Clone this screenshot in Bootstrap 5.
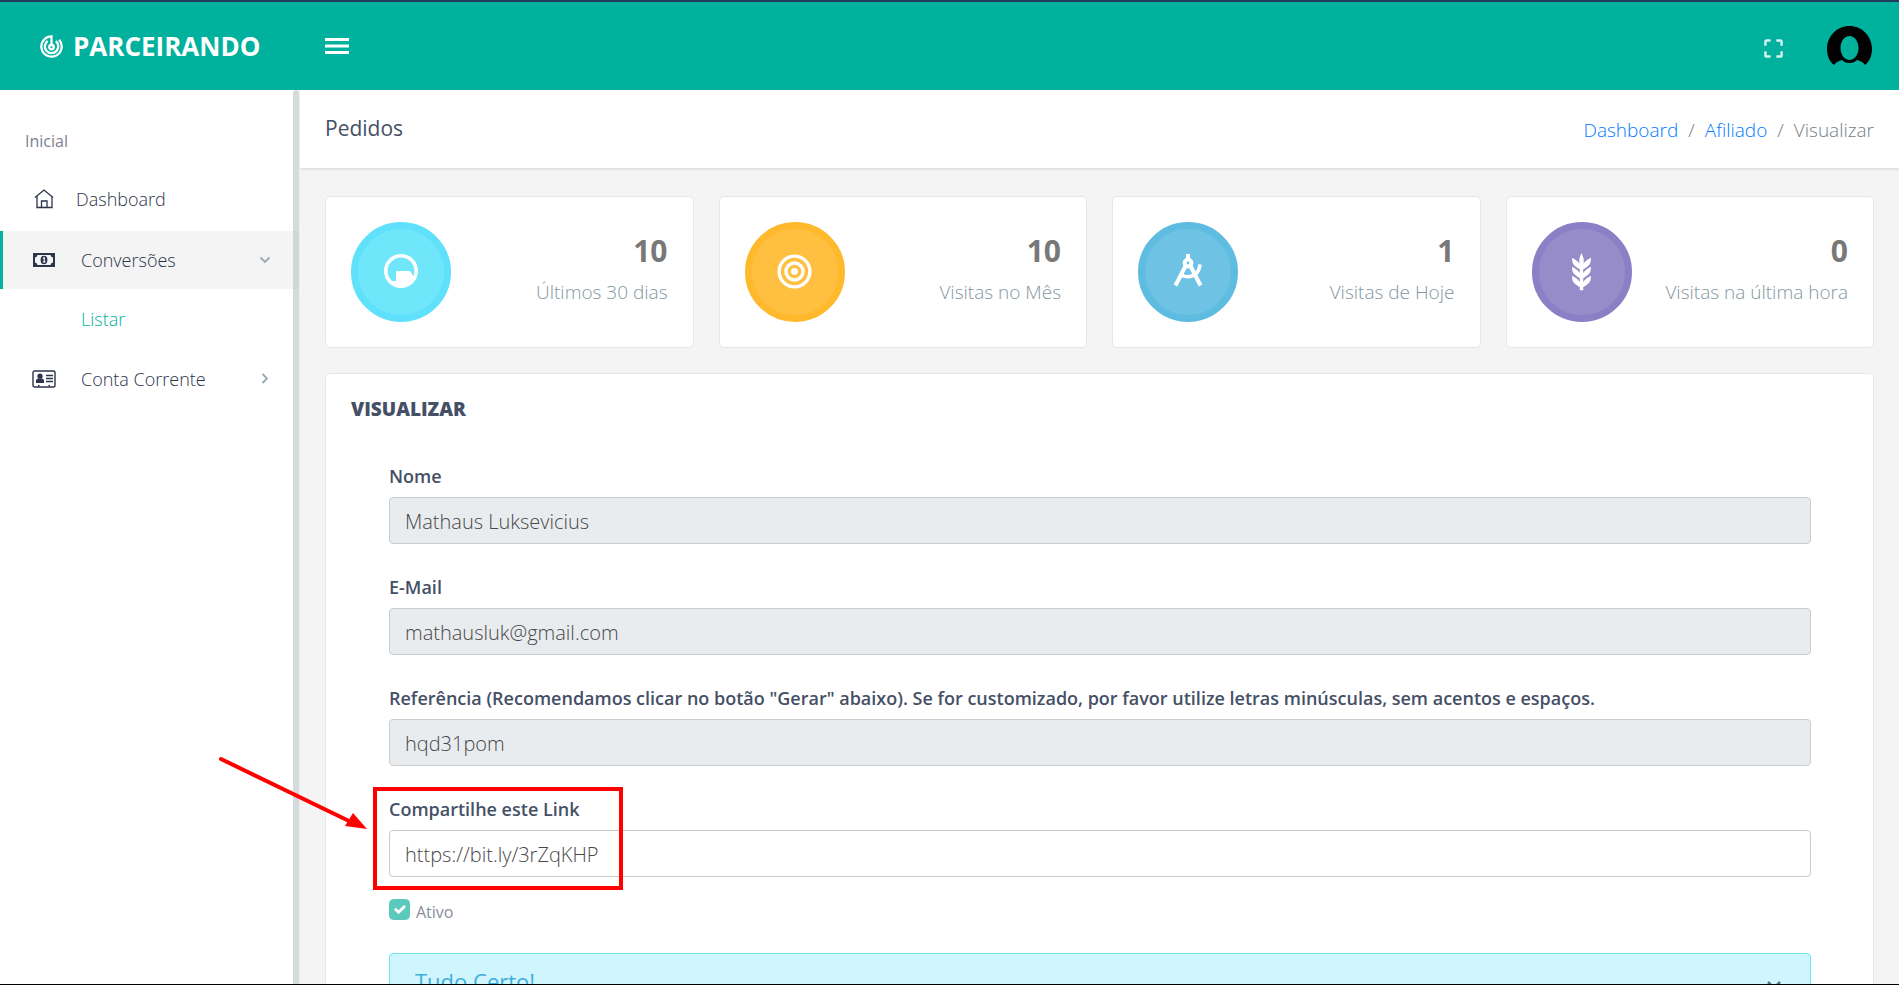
<!DOCTYPE html>
<html lang="pt-BR">
<head>
<meta charset="utf-8">
<meta name="viewport" content="width=device-width, initial-scale=1">
<title>Parceirando - Pedidos</title>
<link href="https://cdn.jsdelivr.net/npm/bootstrap@5.3.0/dist/css/bootstrap.min.css" rel="stylesheet">
<style>
  body { font-family: "Open Sans", "Noto Sans", sans-serif; font-weight: 300; font-size: 18px; line-height: 26px; color: #67757c; background: #f4f4f4; }
  .topbar { flex: none; height: 90px; background: #00b19d; border-top: 2px solid #1d3c5e; }
  .brand { width: 300px; padding-left: 40px; gap: 10px; font-size: 26px; font-weight: 700; color: #fff; text-decoration: none; }
  .avatar { margin: 0 26px 0 42px; }
  .side { flex: none; width: 300px; background: #fff; padding-top: 38px; border-right: 1px solid #eee; position: relative; }
  .side::after { content: ""; position: absolute; top: 0; bottom: 0; right: 0; width: 6px; border-radius: 3px 3px 0 0; background: rgba(190,198,202,.65); }
  .side-caption { padding-left: 25px; font-size: 16px; font-weight: 400; color: #7b8190; margin-bottom: 16px; }
  .side-link { display: flex; align-items: center; height: 58px; border-left: 3px solid transparent; padding: 0 28px 0 29px; color: #2b334b; text-decoration: none; }
  .side-link svg:first-child { flex: none; width: 24px; margin-right: 25px; }
  .side-link.home svg:first-child { margin-right: 20px; }
  .side-link.current { background: #f4f4f4; border-color: #00b19d; margin-top: 3px; }
  .side-sub { display: block; padding: 17px 0 18px 81px; color: #00b19d; text-decoration: none; }
  .pagehead { height: 78px; padding: 0 25px; background: #fff; box-shadow: 0 1px 3px rgba(0,0,0,.14); }
  .pagehead h1 { font-size: 21px; font-weight: 500; color: #455066; margin: 0; }
  .breadcrumb { --bs-breadcrumb-divider-color: #767e86; --bs-breadcrumb-item-active-color: #767e86; --bs-breadcrumb-item-padding-x: 10px; font-size: 19px; padding-top: 2px; }
  .breadcrumb a { color: #007bff; text-decoration: none; }
  .body-pad { padding: 28px 25px 0; }
  .tiles { --bs-gutter-x: 25px; }
  .card { border-color: #e6e6e6; border-radius: 5px; }
  .tile { height: 152px; padding: 25px; }
  .disc { flex: none; width: 100px; height: 100px; border: 7px solid; border-radius: 50%; display: flex; align-items: center; justify-content: center; }
  .disc svg { width: 36px; height: 36px; }
  .disc svg.wide { width: 41px; height: 41px; margin-bottom: 2px; }
  .figure-num { font-size: 30px; font-weight: 700; line-height: 38px; color: #787878; margin-bottom: 2px; }
  .figure-cap { font-size: 19px; color: #84979f; line-height: 40px; }
  .panel { margin-top: 25px; padding: 22px 25px; height: 700px; }
  .panel h2 { font-size: 19px; font-weight: 800; line-height: 26px; color: #455066; margin: 0 0 41px; }
  .fields { padding: 0 37px 0 38px; }
  .field { position: relative; margin-bottom: 30px; }
  .form-label { display: block; font-size: 18px; font-weight: 600; line-height: 26px; color: #455066; margin-bottom: 8px; }
  .form-control { height: 47px; padding: 9px 15px 7px; font-size: 20px; font-weight: 300; color: #484848; border: 1px solid #ccc; border-radius: 4px; }
  .form-control:disabled { background: #e9ecef; color: #484848; }
  .field-last { margin-bottom: 22px; }
  .frame { position: absolute; left: -16px; top: -9px; width: 250px; height: 103px; border: 4px solid #f00; }
  .arrow { position: absolute; left: -172px; top: -41px; }
  .check-row { gap: 6px; }
  .form-check-input { width: 21px; height: 21px; margin: 0; border-radius: 4px; }
  .form-check-input:checked { background-color: #5bcabc; border-color: #5bcabc; }
  .form-check-label { font-size: 16px; font-weight: 400; color: #868e9c; line-height: 26px; }
  .alert { --bs-alert-bg: #cff6fe; --bs-alert-border-color: #6fe5f8; --bs-alert-color: #3eaedb; --bs-alert-border-radius: 4px; margin-top: 28px; padding: 13px 25px; height: 120px; }
  .alert h3 { font-size: 22px; font-weight: 500; margin: 0; line-height: 28px; }
  .close-x { position: absolute; right: 29px; top: 27px; border: 0; background: none; padding: 0; color: #5b7177; display: flex; }
  .edge { height: 1px; background: #000; }
</style>
</head>
<body class="vh-100 overflow-hidden d-flex flex-column">
<header class="topbar d-flex align-items-center">
  <a href="#" class="brand d-flex align-items-center">
    <svg width="23" height="23" viewBox="0 0 24 24" fill="none" stroke="#fff" stroke-width="2.4"><path d="M12 12V1.400A10.600 10.600 0 1 0 20 5"/><path d="M8 6.200A7 7 0 1 0 16.500 6.500"/><circle cx="12" cy="12.500" r="2.400"/></svg>
    <span>PARCEIRANDO</span>
  </a>
  <button type="button" class="btn border-0 p-0 ms-4 me-auto d-flex" aria-label="Menu">
    <svg width="26" height="20" viewBox="0 0 26 20" fill="#fff"><path d="M1 2h24v3H1zM1 8.500h24v3H1zM1 15h24v3H1z"/></svg>
  </button>
  <button type="button" class="btn border-0 p-0 pt-1 d-flex" aria-label="Tela cheia">
    <svg width="19" height="19" viewBox="0 0 20 20" fill="none" stroke="#d5f2ee" stroke-width="2.600"><path d="M1.500 7V3q0-1.500 1.500-1.500h4M13 1.500h4q1.500 0 1.500 1.500v4M18.500 13v4q0 1.500-1.500 1.500h-4M7 18.500H3q-1.500 0-1.500-1.500v-4"/></svg>
  </button>
  <a href="#" class="avatar d-flex" aria-label="Perfil">
    <svg width="48" height="48" viewBox="0 0 48 48"><path fill-rule="evenodd" d="M9 43C4 39 2 33 2 27 2 14 12 4 24.500 4S47 14 47 27c0 6-2 12-7 16-2-3-5-4-8-5-2 2-4 3-7.500 3S19 40 17 38c-3 1-6 2-8 5zM24.500 14c-5 0-9 5.500-9 12s4 12 9 12 9-5.500 9-12-4-12-9-12z"/></svg>
  </a>
</header>
<div class="d-flex flex-grow-1 overflow-hidden">
  <nav class="side">
    <div class="side-caption">Inicial</div>
    <a href="#" class="side-link home"><svg height="24" viewBox="0 0 24 24" fill="none" stroke="currentColor" stroke-width="1.300"><path d="M3 10.500 12 3l9 7.500M5 9v11.500h15V9M9.500 20.500V14h5.500v6.500"/></svg>Dashboard</a>
    <a href="#" class="side-link current"><svg height="16" viewBox="0 0 24 16"><path fill="#2c344b" fill-rule="evenodd" d="M1 1h22v14H1zM5.500 3A3 3 0 0 1 3 5.500v5A3 3 0 0 1 5.500 13h13a3 3 0 0 1 2.500-2.500v-5A3 3 0 0 1 18.500 3z"/><ellipse cx="12" cy="8" rx="3.400" ry="4.200" fill="#2c344b"/><path d="m11 6.500 1.200-.8v4M10.800 10h2.800" stroke="#fff" stroke-width="1.100" fill="none"/></svg><span class="me-auto">Conversões</span><svg width="12" height="12" viewBox="0 0 12 12" fill="none" stroke="#9aa9b0" stroke-width="1.800"><path d="m1.500 3.500 4.500 4.500 4.500-4.500"/></svg></a>
    <a href="#" class="side-sub">Listar</a>
    <a href="#" class="side-link"><svg height="18" viewBox="0 0 24 18"><rect x="1" y="1" width="22" height="16" rx="1.500" fill="none" stroke="#2c344b" stroke-width="1.400"/><circle cx="8" cy="6.200" r="2.600" fill="#2c344b"/><path d="M4 13V11q0-2.500 2.500-2.500h3Q12 8.500 12 11v2zM6 15h1.500v1.500H6zM16.500 15H18v1.500h-1.500z" fill="#2c344b"/><path d="M14 5.500h7M14 8.500h7M14 11.500h7" stroke="#2c344b" stroke-width="1.300"/></svg><span class="me-auto">Conta Corrente</span><svg width="12" height="12" viewBox="0 0 12 12" fill="none" stroke="#9aa9b0" stroke-width="1.800"><path d="m3.500 1 4.500 4.500-4.500 4.500"/></svg></a>
  </nav>
  <main class="flex-grow-1">
    <div class="pagehead d-flex align-items-center justify-content-between">
      <h1>Pedidos</h1>
      <ol class="breadcrumb mb-0">
        <li class="breadcrumb-item"><a href="#">Dashboard</a></li>
        <li class="breadcrumb-item"><a href="#">Afiliado</a></li>
        <li class="breadcrumb-item active" aria-current="page">Visualizar</li>
      </ol>
    </div>
    <div class="body-pad">
      <div class="row tiles">
        <div class="col-3"><div class="card tile flex-row align-items-center justify-content-between">
          <div class="disc" style="background:#70e6fa;border-color:#5fe1fb"><svg viewBox="0 0 36 36"><circle cx="18" cy="17" r="15.200" fill="none" stroke="#fff" stroke-width="3.600"/><path fill="#fff" d="M13 17h14l4 6q-3 10-13 10l-9-3v-3h4z"/></svg></div>
          <div class="text-end"><div class="figure-num">10</div><div class="figure-cap">Últimos 30 dias</div></div>
        </div></div>
        <div class="col-3"><div class="card tile flex-row align-items-center justify-content-between">
          <div class="disc" style="background:#ffc042;border-color:#ffb92c"><svg class="wide" viewBox="0 0 24 24" fill="none" stroke="#fff" stroke-width="2"><circle cx="12" cy="12" r="9"/><circle cx="12" cy="12" r="5"/><circle cx="12" cy="12" r="2" fill="#fff" stroke="none"/></svg></div>
          <div class="text-end"><div class="figure-num">10</div><div class="figure-cap">Visitas no Mês</div></div>
        </div></div>
        <div class="col-3"><div class="card tile flex-row align-items-center justify-content-between">
          <div class="disc" style="background:#6ec3e5;border-color:#5fbce1"><svg viewBox="0 0 36 36" fill="none" stroke="#fff" stroke-width="4"><circle cx="18" cy="9" r="3.400"/><path d="M18 0v6M15.500 12 5.500 31.500M20.500 12l10 19.500"/><path d="M9.500 20.500Q18 25 25 20.500 29.500 17 30 10.500" stroke-width="3.600"/></svg></div>
          <div class="text-end"><div class="figure-num">1</div><div class="figure-cap">Visitas de Hoje</div></div>
        </div></div>
        <div class="col-3"><div class="card tile flex-row align-items-center justify-content-between">
          <div class="disc" style="background:#968cca;border-color:#8b80c6"><svg class="wide" viewBox="0 0 24 24" fill="#fff"><path d="M7.330 18.330C6.500 17.170 6.500 15.830 6.500 14.500C8.170 15.500 9.830 16.500 10.670 17.670L11 18.230V15.950C9.500 15.050 8.080 14.130 7.330 13.080C6.500 11.920 6.500 10.580 6.500 9.250C8.170 10.250 9.830 11.250 10.670 12.420L11 13V10.700C9.500 9.800 8.080 8.880 7.330 7.830C6.500 6.670 6.500 5.330 6.500 4C8.170 5 9.830 6 10.670 7.170L10.940 7.620C10.770 7 10.660 6.420 10.650 5.820C10.640 4.310 11.300 2.760 11.960 1.210C12.650 2.690 13.340 4.180 13.350 5.690C13.360 6.320 13.250 6.960 13.070 7.590L13.330 7.170C14.170 6 15.830 5 17.500 4C17.500 5.330 17.500 6.670 16.670 7.830C15.920 8.880 14.500 9.800 13 10.700V13L13.330 12.420C14.170 11.250 15.830 10.250 17.500 9.250C17.500 10.580 17.500 11.920 16.670 13.080C15.920 14.130 14.500 15.050 13 15.950V18.230L13.330 17.670C14.170 16.500 15.830 15.500 17.500 14.500C17.500 15.830 17.500 17.170 16.670 18.330C15.920 19.380 14.500 20.300 13 21.200V23H11V21.200C9.500 20.300 8.080 19.380 7.330 18.330Z"/></svg></div>
          <div class="text-end"><div class="figure-num">0</div><div class="figure-cap">Visitas na última hora</div></div>
        </div></div>
      </div>
      <section class="card panel">
        <h2>VISUALIZAR</h2>
        <form class="fields">
          <div class="field"><label class="form-label" for="nome">Nome</label><input id="nome" class="form-control" value="Mathaus Luksevicius" disabled></div>
          <div class="field"><label class="form-label" for="email">E-Mail</label><input id="email" class="form-control" value="mathausluk@gmail.com" disabled></div>
          <div class="field"><label class="form-label" for="ref">Referência (Recomendamos clicar no botão "Gerar" abaixo). Se for customizado, por favor utilize letras minúsculas, sem acentos e espaços.</label><input id="ref" class="form-control" value="hqd31pom" disabled></div>
          <div class="field field-last"><label class="form-label" for="link">Compartilhe este Link</label><input id="link" class="form-control" value="https://bit.ly/3rZqKHP">
            <div class="frame"></div>
            <svg class="arrow" width="150" height="76" viewBox="0 0 150 76"><path d="M4 4 132 66" stroke="#f00" stroke-width="4" stroke-linecap="round"/><path d="m136 58 14 16-22-3z" fill="#f00"/></svg>
          </div>
          <div class="d-flex check-row"><input type="checkbox" class="form-check-input" id="ativo" checked><label class="form-check-label" for="ativo">Ativo</label></div>
          <div class="alert position-relative"><h3>Tudo Certo!</h3>
            <button type="button" class="close-x" aria-label="Fechar"><svg width="14" height="14" viewBox="0 0 14 14" stroke="currentColor" stroke-width="2.500"><path d="m1 1 12 12M13 1 1 13"/></svg></button>
          </div>
        </form>
      </section>
    </div>
  </main>
</div>
<div class="edge fixed-bottom"></div>
<script src="https://cdn.jsdelivr.net/npm/bootstrap@5.3.0/dist/js/bootstrap.bundle.min.js"></script>
</body>
</html>
